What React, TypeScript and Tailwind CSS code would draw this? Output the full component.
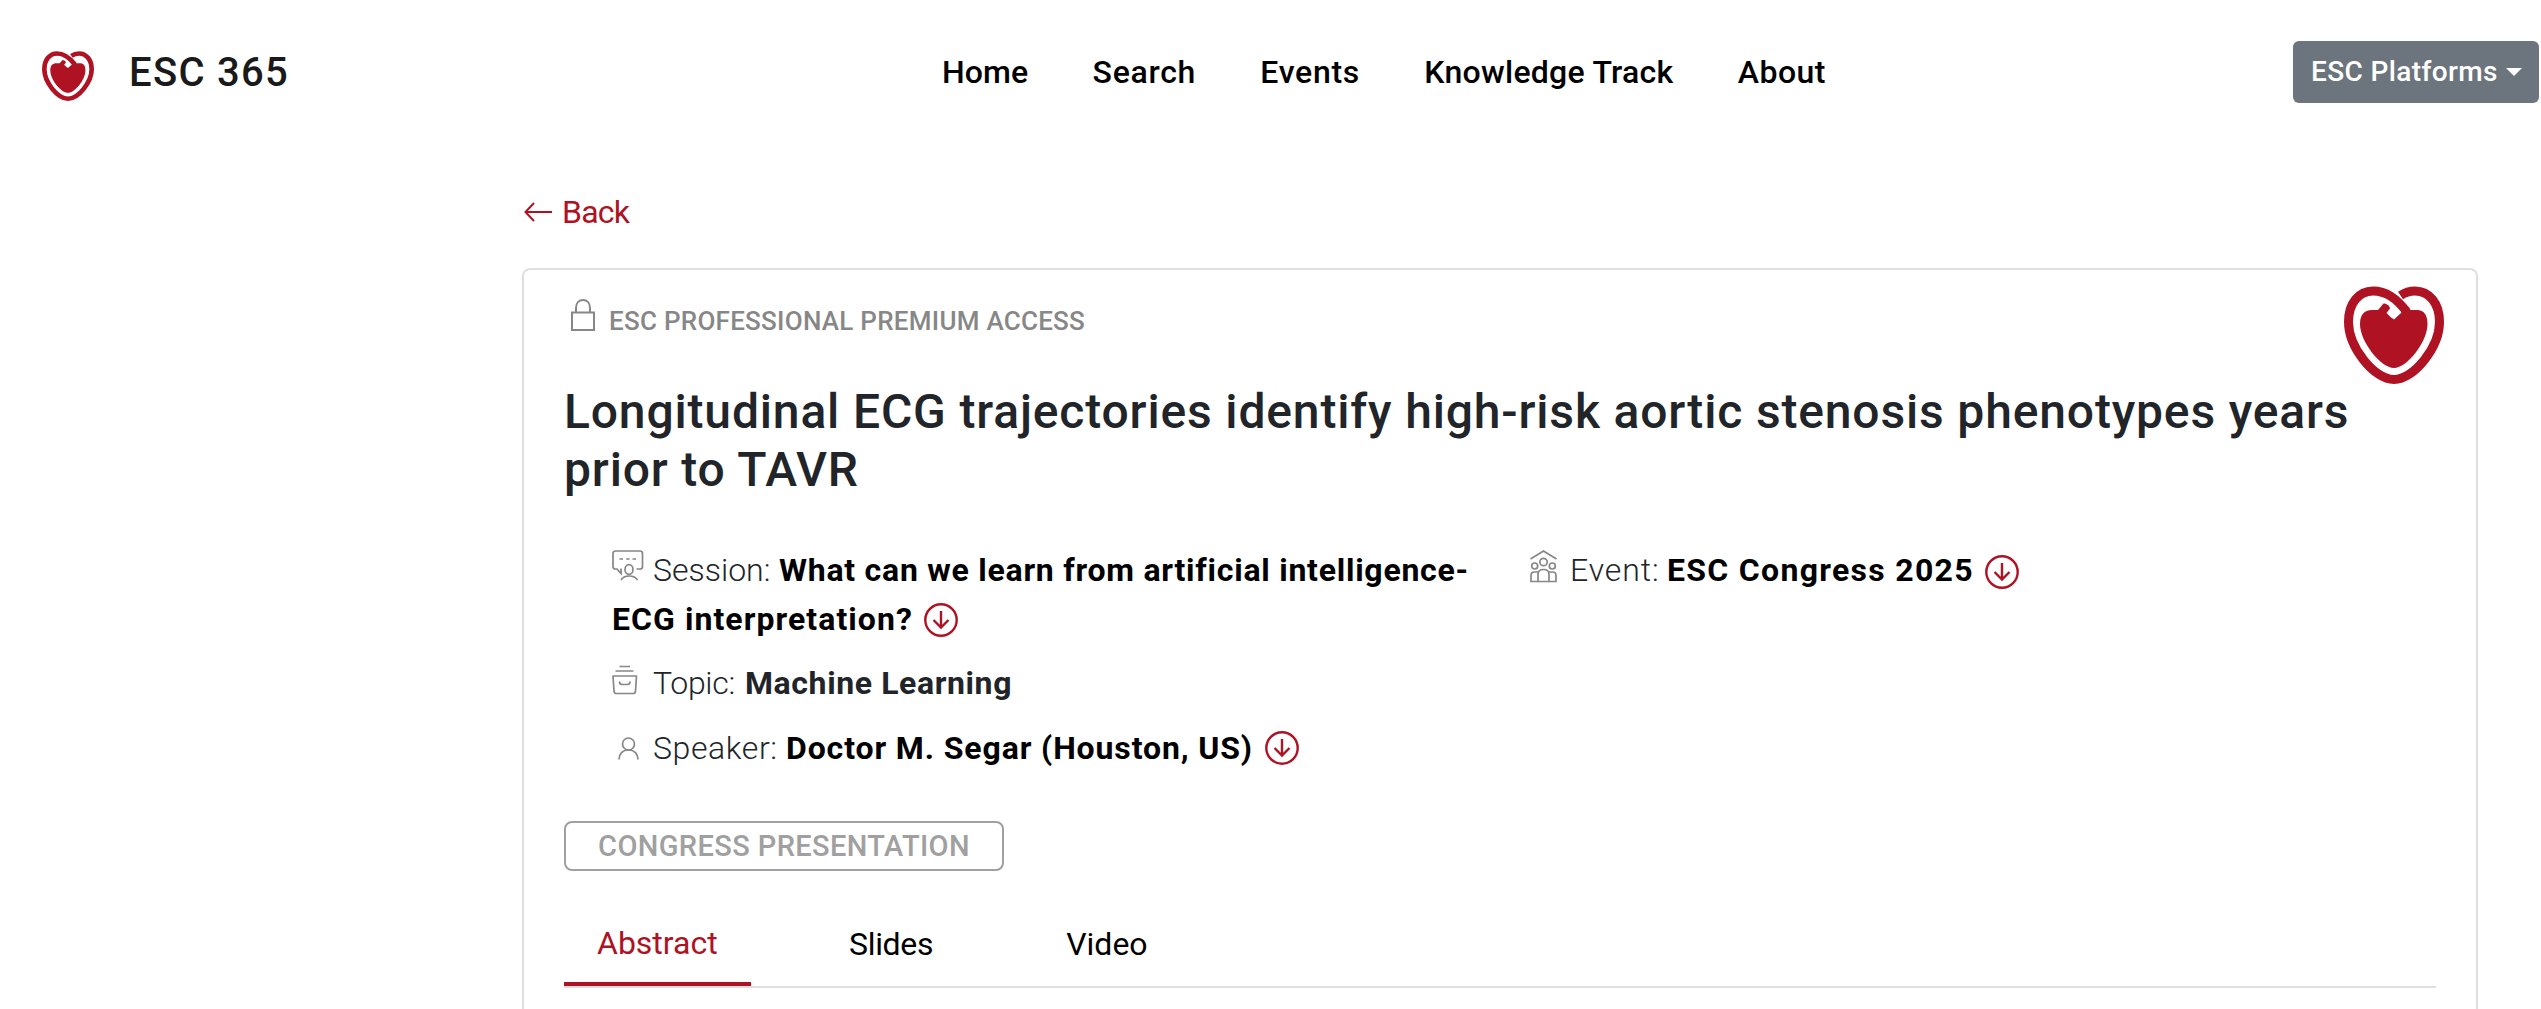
const navItems = [
  { label: "Home", className: "tracking-[0.1px]" },
  { label: "Search", className: "tracking-[0.7px]" },
  { label: "Events", className: "tracking-[0.7px]" },
  { label: "Knowledge Track", className: "tracking-[0.26px]" },
  { label: "About", className: "tracking-[0.46px]" },
];

function Heart({ className }: { className: string }) {
  return (
    <svg viewBox="0 0 100 98" preserveAspectRatio="none" fill="none" className={className}>
      <path
        d="M56.5 9.500C61 6.500 66 5 71 5C85 5 95.5 17 95.5 36C95.5 61 70 93.5 50 93.5C30 93.5 4.5 61 4.5 36C4.5 17 15 5 29 5C42 5 52 12 63 26"
        stroke="#ae1223"
        strokeWidth="9"
      />
      <path
        d="M16 38C16 29 20 24 28 24H34L39.5 17.5C42 17.5 46 19.5 46 22.5L42.5 27L46.5 31L50 33.5L57 27L61 20L66 24H73C80 24 83.500 29 83.500 38C83.500 56 63 82 50 82C37 82 16 56 16 38Z"
        fill="#ae1223"
      />
    </svg>
  );
}

function LockIcon() {
  return (
    <svg viewBox="0 0 26 34" fill="none" stroke="#878787" strokeWidth="2" className="h-[34px] w-[26px]">
      <path d="M2 14.500H24V32H2Z" />
      <path d="M6 14.500V10C6 5 9 2 13 2C17 2 20 5 20 10V14.500" />
    </svg>
  );
}

function SessionIcon() {
  return (
    <svg viewBox="0 0 32 31" fill="none" stroke="#878787" strokeWidth="1.700" className="h-[31px] w-8">
      <path d="M24.500 19H28C29.500 19 30.500 18 30.500 16.500V3.500C30.500 2 29.500 1 28 1H3.500C2 1 1 2 1 3.500V16.500C1 18 2 19 3.500 19H5L9 23.500V18.500" />
      <path d="M7.500 9H11M14.200 9H17.500M20.500 9H24" />
      <ellipse cx="17" cy="19.500" rx="4" ry="4.800" />
      <path d="M9 30C10.500 27.500 13 26 17 26C21 26 24 27.500 25.500 30" />
    </svg>
  );
}

function EventIcon() {
  return (
    <svg viewBox="0 0 28 33" fill="none" stroke="#878787" strokeWidth="1.700" className="h-[33px] w-7">
      <path d="M.500 9L13.500 1L26.500 9" />
      <circle cx="13.500" cy="12" r="3.700" />
      <circle cx="4.700" cy="16" r="3" />
      <circle cx="22.300" cy="16" r="3" />
      <path d="M8 31.500V24.500C8 21 10 19.500 13.500 19.500C17 19.500 19 21 19 24.500V31.500Z" />
      <path d="M8 22H4.500C2 22 1 23.500 1 25.500V31.500H8M19 22H22.500C25 22 26 23.500 26 25.500V31.500H19" />
    </svg>
  );
}

function TopicIcon() {
  return (
    <svg viewBox="0 0 26 30" fill="none" stroke="#878787" strokeWidth="1.700" className="h-[30px] w-[26px]">
      <path d="M7.500 1.500H18M3.500 6H21.500" />
      <path d="M1 11H24.500L23.500 26C23.500 27.500 22.500 28.500 21 28.500H4.500C3 28.500 2 27.500 2 26Z" strokeLinejoin="round" />
      <path d="M7.500 16.500C7.500 18.500 8.500 19.500 10 19.500H15.500C17 19.500 18 18.500 18 16.500" />
    </svg>
  );
}

function SpeakerIcon() {
  return (
    <svg viewBox="0 0 22 23" fill="none" stroke="#878787" strokeWidth="1.700" className="h-[23px] w-[22px]">
      <circle cx="10.500" cy="7" r="6" />
      <path d="M1 22.500C1 17 4.500 13 10.500 13C16.500 13 20 17 20 22.500" />
    </svg>
  );
}

function DownCircle({ className }: { className: string }) {
  return (
    <svg viewBox="0 0 34 34" fill="none" stroke="#ae1223" strokeWidth="2.400" className={`size-[34px] shrink-0 ${className}`}>
      <circle cx="17" cy="17" r="15.700" />
      <path d="M17 8V25M9.500 17L17 24.500L24.500 17" />
    </svg>
  );
}

export default function App() {
  return (
    <div className="h-[1009px] overflow-hidden bg-white font-['Roboto',sans-serif] text-[32px] leading-[48px] text-[#212529]">
      <header className="flex h-36 items-center">
        <div className="flex w-[942px] items-center pl-[42px]">
          <Heart className="mt-2 h-[50px] w-[52px]" />
          <span className="mt-0.5 ml-[35px] text-[40px] font-medium tracking-[1.28px] text-[#1a1a1a]">ESC 365</span>
        </div>
        <nav className="flex gap-[64.300px] font-medium text-black">
          {navItems.map((item) => (
            <a key={item.label} href="#" className={item.className}>
              {item.label}
            </a>
          ))}
        </nav>
        <button className="mr-0.5 ml-auto flex h-[62px] w-[246px] items-center rounded-md bg-[#6c757d] pl-[18px] text-[28px] font-medium tracking-[0.38px] text-white">
          ESC Platforms
          <svg viewBox="0 0 16 8" fill="white" className="ml-2 h-2 w-4">
            <path d="M0 0H16L8 8Z" />
          </svg>
        </button>
      </header>

      <main className="ml-[522px] w-[1956px] pt-11">
        <a href="#" className="flex h-12 items-center tracking-[-0.8px] text-[#ae1223]">
          <svg viewBox="0 0 30 22" fill="none" stroke="#ae1223" strokeWidth="2" className="mr-2 ml-0.5 h-[22px] w-[30px]">
            <path d="M28 11H1.500M10 2L1.500 11L10 20" />
          </svg>
          Back
        </a>

        <article className="relative mt-8 h-[760px] rounded-lg border-2 border-[#dfdfdf] px-10 pt-[27px]">
          <Heart className="absolute top-4 right-8 h-[98px] w-[100px]" />

          <p className="flex text-[26px] font-medium tracking-[0.26px] text-[#878787]">
            <span className="mt-px mr-[13px] ml-1.5">
              <LockIcon />
            </span>
            ESC PROFESSIONAL PREMIUM ACCESS
          </p>

          <h1 className="mt-[38px] text-[48px] leading-[57.600px] font-medium tracking-[0.84px]">
            Longitudinal ECG trajectories identify high-risk aortic stenosis phenotypes years
            <br />
            prior to TAVR
          </h1>

          <div className="mt-12 flex pl-12">
            <div className="w-[917px]">
              <div className="leading-[49px]">
                <div className="flex">
                  <span className="w-[41px] pt-1">
                    <SessionIcon />
                  </span>
                  <span className="w-[126px] font-light">Session:</span>
                  <b className="tracking-[0.75px] whitespace-nowrap text-black">What can we learn from artificial intelligence-</b>
                </div>
                <div className="flex items-center">
                  <b className="tracking-[1.06px] text-black">ECG interpretation?</b>
                  <DownCircle className="ml-[11px]" />
                </div>
              </div>
              <div className="mt-[15px] flex">
                <span className="w-[41px] pt-1.5">
                  <TopicIcon />
                </span>
                <span className="w-[92px] font-light tracking-[-0.3px]">Topic:</span>
                <b className="tracking-[0.6px]">Machine Learning</b>
              </div>
              <div className="mt-[17px] flex items-center">
                <span className="w-[41px] pl-1.5">
                  <SpeakerIcon />
                </span>
                <span className="w-[133px] font-light tracking-[0.6px]">Speaker:</span>
                <b className="tracking-[0.88px] text-black">Doctor M. Segar (Houston, US)</b>
                <DownCircle className="ml-3" />
              </div>
            </div>
            <div className="flex h-[50px] items-start leading-[49px]">
              <span className="w-[41px] pt-1 pl-px">
                <EventIcon />
              </span>
              <span className="w-[97px] font-light tracking-[0.9px]">Event:</span>
              <b className="tracking-[1.3px] text-black">ESC Congress 2025</b>
              <DownCircle className="mt-[9px] ml-[11px]" />
            </div>
          </div>

          <span className="mt-[49px] flex h-[50px] w-[440px] items-center justify-center rounded-lg border-2 border-[#a0a0a0] text-[29px] font-medium tracking-[0.39px] text-[#a0a0a0]">
            CONGRESS PRESENTATION
          </span>

          <div className="mt-9 flex h-[81px] border-b-2 border-[#dfdfdf] text-black">
            <a href="#" className="h-[79px] w-[187px] border-b-4 border-[#ae1223] pt-3 pl-[33px] text-[#ae1223]">
              Abstract
            </a>
            <a href="#" className="pt-[13px] pl-[98px] tracking-[-0.32px]">
              Slides
            </a>
            <a href="#" className="pt-[13px] pl-[133px]">
              Video
            </a>
          </div>
        </article>
      </main>
    </div>
  );
}
